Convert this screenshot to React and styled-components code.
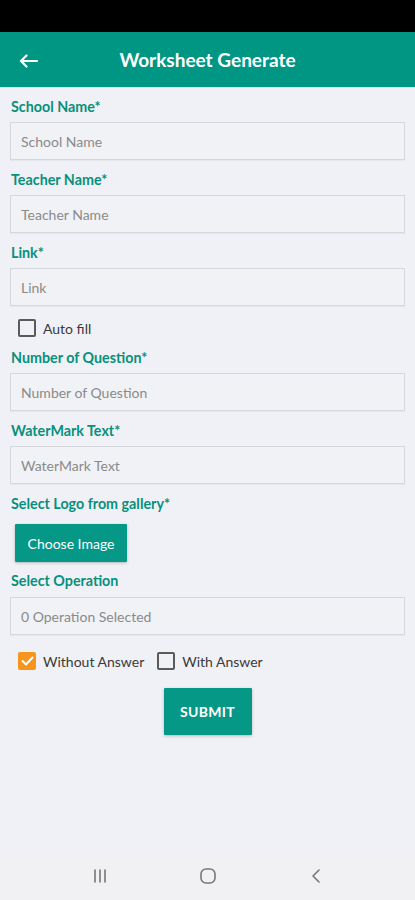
import styled, { createGlobalStyle } from 'styled-components';

const GlobalStyle = createGlobalStyle`
  html, body {
    margin: 0;
    padding: 0;
    background: #f0f1f6;
    font-family: Lato, "Open Sans", sans-serif;
  }
  * { box-sizing: border-box; }
`;

const Screen = styled.div`
  width: 415px;
  height: 900px;
  display: flex;
  flex-direction: column;
  background: #f0f1f6;
  overflow: hidden;
`;

const StatusBar = styled.div`
  height: 32px;
  background: #000;
  flex-shrink: 0;
`;

const Header = styled.header`
  height: 56px;
  flex-shrink: 0;
  background: #009684;
  display: flex;
  align-items: center;
  position: relative;
  border-bottom: 1px solid #c9ece6;
  > h1 {
    flex: 1;
    margin: 0;
    text-align: center;
    color: #fff;
    font-size: 19px;
    font-weight: 700;
    padding-right: 0;
  }
`;

const BackButton = styled.button`
  position: absolute;
  left: 16px;
  top: 18px;
  width: 26px;
  height: 22px;
  padding: 0;
  border: none;
  background: none;
  display: flex;
  align-items: center;
  justify-content: center;
`;

const Form = styled.main`
  flex: 1;
  padding: 10px 10px 0 10px;
  display: flex;
  flex-direction: column;
`;

const Label = styled.div`
  color: #07907c;
  font-size: 14.3px;
  font-weight: 700;
  line-height: 18px;
  margin-top: ${(p) => p.$mt || 0}px;
  padding-left: 1px;
`;

const Input = styled.div`
  height: 38px;
  margin-top: ${(p) => p.$mt || 6}px;
  border: 1.5px solid #d6d7dc;
  background: #f1f2f6;
  display: flex;
  align-items: center;
  padding-left: 10px;
  color: #8a8a8a;
  font-size: 14px;
  box-shadow: 0 1px 1px rgba(0,0,0,0.04);
`;

const CheckRow = styled.div`
  display: flex;
  align-items: center;
  height: 20px;
  margin-top: ${(p) => p.$mt || 0}px;
  padding-left: 8px;
  gap: 13px;
`;

const Check = styled.label`
  display: flex;
  align-items: center;
  gap: 7px;
  color: #3a3a3a;
  font-size: 14px;
`;

const Box = styled.span`
  width: 18px;
  height: 18px;
  border-radius: 2px;
  border: ${(p) => (p.$checked ? 'none' : '2px solid #5a5a5a')};
  background: ${(p) => (p.$checked ? '#f6941e' : 'transparent')};
  display: flex;
  align-items: center;
  justify-content: center;
`;

const TealButton = styled.button`
  background: #069886;
  color: #fff;
  border: none;
  border-radius: 1px;
  font-family: Lato, sans-serif;
  box-shadow: 0 1px 3px rgba(0,0,0,0.25);
  height: ${(p) => p.$h}px;
  width: ${(p) => p.$w}px;
  font-size: 14px;
  font-weight: ${(p) => (p.$bold ? 700 : 400)};
  letter-spacing: ${(p) => (p.$bold ? '0.3px' : '0')};
  margin-top: ${(p) => p.$mt}px;
  margin-left: ${(p) => p.$ml}px;
  align-self: ${(p) => p.$align || 'flex-start'};
`;

const NavBar = styled.nav`
  height: 46px;
  background: #f1f1f3;
  display: flex;
  align-items: center;
  justify-content: center;
  gap: 86px;
  padding-bottom: 2px;
  flex-shrink: 0;
`;

const NavIcon = styled.span`
  width: 22px;
  display: flex;
  justify-content: center;
`;

function Field({ label, placeholder, labelMt = 11, inputMt }) {
  return (
    <>
      <Label $mt={labelMt}>{label}</Label>
      <Input $mt={inputMt}>{placeholder}</Input>
    </>
  );
}

export default function App() {
  return (
    <Screen>
      <GlobalStyle />
      <StatusBar />
      <Header>
        <BackButton aria-label="Back">
          <svg width="20" height="14" viewBox="0 0 20 14" fill="none" stroke="#fff" strokeWidth="2.2" strokeLinecap="round" strokeLinejoin="round">
            <path d="M18 7H2M7.5 1.5L2 7l5.5 5.5" />
          </svg>
        </BackButton>
        <h1>Worksheet Generate</h1>
      </Header>
      <Form>
        <Field label="School Name*" placeholder="School Name" labelMt={0} />
        <Field label="Teacher Name*" placeholder="Teacher Name" />
        <Field label="Link*" placeholder="Link" />
        <CheckRow $mt={12}>
          <Check><Box />Auto fill</Check>
        </CheckRow>
        <Field label="Number of Question*" placeholder="Number of Question" />
        <Field label="WaterMark Text*" placeholder="WaterMark Text" />
        <Label $mt={11}>Select Logo from gallery*</Label>
        <TealButton $w={112} $h={38} $mt={11} $ml={5}>Choose Image</TealButton>
        <Label $mt={10}>Select Operation</Label>
        <Input $mt={7}>0 Operation Selected</Input>
        <CheckRow $mt={16}>
          <Check>
            <Box $checked>
              <svg width="13" height="10" viewBox="0 0 13 10" fill="none" stroke="#fff" strokeWidth="2" strokeLinecap="round" strokeLinejoin="round">
                <path d="M1.5 5l3.5 3.5L11.5 1.5" />
              </svg>
            </Box>
            Without Answer
          </Check>
          <Check><Box />With Answer</Check>
        </CheckRow>
        <TealButton $bold $w={88} $h={47} $mt={17} $ml={0} $align="center">SUBMIT</TealButton>
      </Form>
      <NavBar>
        <NavIcon>
          <svg width="16" height="16" viewBox="0 0 16 16" stroke="#777" strokeWidth="1.6" strokeLinecap="round">
            <path d="M3 2v12M8 2v12M13 2v12" />
          </svg>
        </NavIcon>
        <NavIcon>
          <svg width="18" height="18" viewBox="0 0 18 18" fill="none" stroke="#777" strokeWidth="1.6">
            <rect x="2" y="2" width="14" height="14" rx="5" />
          </svg>
        </NavIcon>
        <NavIcon>
          <svg width="12" height="16" viewBox="0 0 12 16" fill="none" stroke="#777" strokeWidth="1.6" strokeLinecap="round" strokeLinejoin="round">
            <path d="M9 2L3 8l6 6" />
          </svg>
        </NavIcon>
      </NavBar>
    </Screen>
  );
}
